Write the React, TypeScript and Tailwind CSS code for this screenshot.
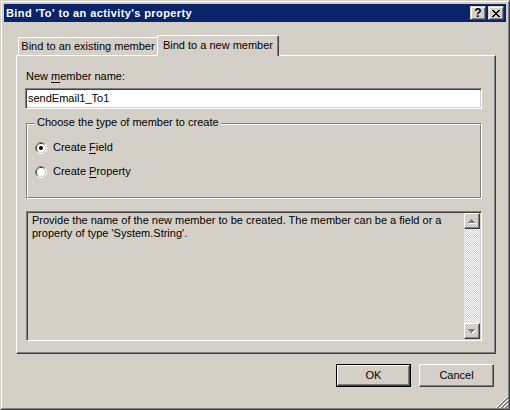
import React from 'react'

const FONT = "font-['Tahoma','Liberation_Sans',Arial,sans-serif]"

// raised 3d edge used by push buttons and scroll arrows
const RAISED =
  'border border-t-white border-l-white border-r-[#404040] border-b-[#404040] shadow-[inset_-1px_-1px_0_#808080]'

const SUNKEN =
  'border border-t-[#808080] border-l-[#808080] border-r-white border-b-white shadow-[inset_1px_1px_0_#404040,inset_-1px_-1px_0_#d4d0c8]'

function Radio({ checked }: { checked?: boolean }) {
  return (
    <svg width="12" height="12" viewBox="0 0 12 12" className="shrink-0">
      <path d="M2.11 9.89A5.5 5.5 0 0 1 9.89 2.11" stroke="#808080" fill="none" />
      <path d="M9.89 2.11A5.5 5.5 0 0 1 2.11 9.89" stroke="#ffffff" fill="none" />
      <path d="M2.82 9.18A4.5 4.5 0 0 1 9.18 2.82" stroke="#404040" fill="none" />
      <path d="M9.18 2.82A4.5 4.5 0 0 1 2.82 9.18" stroke="#d4d0c8" fill="none" />
      <circle cx="6" cy="6" r="4" fill="#ffffff" />
      {checked && <circle cx="6" cy="6" r="2" fill="#000000" />}
    </svg>
  )
}

const UP_ROWS: [number, number][] = [
  [3, 1],
  [2, 3],
  [1, 5],
  [0, 7],
]

function Arrow({ down }: { down?: boolean }) {
  const rows = down ? [...UP_ROWS].reverse() : UP_ROWS
  return (
    <svg width="8" height="5" viewBox="0 0 8 5" shapeRendering="crispEdges">
      {rows.map(([x, w], i) => (
        <rect key={'w' + i} x={x + 1} y={i + 1} width={w} height={1} fill="#ffffff" />
      ))}
      {rows.map(([x, w], i) => (
        <rect key={'g' + i} x={x} y={i} width={w} height={1} fill="#808080" />
      ))}
    </svg>
  )
}

function CloseGlyph() {
  const rows = [0, 1, 2, 3, 4, 5, 6]
  return (
    <svg width="8" height="7" viewBox="0 0 8 7" shapeRendering="crispEdges">
      {rows.map((i) => (
        <g key={i}>
          <rect x={i} y={i} width={2} height={1} fill="#000" />
          <rect x={6 - i} y={i} width={2} height={1} fill="#000" />
        </g>
      ))}
    </svg>
  )
}

function SizeGrip() {
  const lines: { s: number; c: string }[] = []
  for (const base of [11, 15, 19]) {
    lines.push({ s: base, c: '#ffffff' })
    lines.push({ s: base + 1, c: '#808080' })
    lines.push({ s: base + 2, c: '#808080' })
  }
  const px: React.ReactNode[] = []
  lines.forEach(({ s, c }) => {
    for (let x = 0; x < 12; x++) {
      const y = s - x
      if (y >= 0 && y < 12) px.push(<rect key={s + '-' + x} x={x} y={y} width={1} height={1} fill={c} />)
    }
  })
  return (
    <svg width="12" height="12" viewBox="0 0 12 12" shapeRendering="crispEdges">
      {px}
    </svg>
  )
}

function CaptionButton({ children }: { children: React.ReactNode }) {
  return (
    <div
      className={`flex h-[14px] w-[16px] items-center justify-center bg-[#d4d0c8] border border-t-[#d4d0c8] border-l-[#d4d0c8] border-r-[#404040] border-b-[#404040] shadow-[inset_1px_1px_0_#fff,inset_-1px_-1px_0_#808080]`}
    >
      {children}
    </div>
  )
}

function Underlined({ children }: { children: React.ReactNode }) {
  return <span className="underline underline-offset-[2px]">{children}</span>
}

export default function App() {
  return (
    <div className={`${FONT} text-[11px] leading-[13px] text-black`}>
      <div className="h-[410px] w-[510px] border border-t-[#d4d0c8] border-l-[#d4d0c8] border-r-[#404040] border-b-[#404040] bg-[#d4d0c8]">
        <div className="relative flex h-full flex-col border border-t-white border-l-white border-r-[#808080] border-b-[#808080] p-[2px]">
          {/* caption */}
          <div className="flex h-[18px] items-center bg-[#0a246a] pl-[2px] pr-[2px]">
            <span className="flex-1 text-[11px] font-bold tracking-[0.4px] text-white">
              Bind 'To' to an activity's property
            </span>
            <div className="flex gap-[2px]">
              <CaptionButton>
                <span className="text-[12px] leading-[12px] font-bold">?</span>
              </CaptionButton>
              <CaptionButton>
                <CloseGlyph />
              </CaptionButton>
            </div>
          </div>

          {/* tabs */}
          <div className="flex h-[33px] items-end pl-[14px]">
            <div className="flex h-[18px] w-[139px] items-center justify-center rounded-tl-[2px] border-l border-t border-white">
              Bind to an existing member
            </div>
            <div className="relative z-10 -mb-px flex h-[21px] w-[122px] items-center justify-center rounded-t-[2px] border-l border-t border-r border-l-white border-t-white border-r-[#404040] bg-[#d4d0c8] pb-[2px] shadow-[inset_-1px_0_0_#808080]">
              Bind to a new member
            </div>
          </div>

          {/* tab page */}
          <div className="ml-[12px] h-[299px] w-[480px] border border-t-white border-l-white border-r-[#404040] border-b-[#404040] shadow-[inset_-1px_-1px_0_#808080]">
            <div className="flex flex-col px-[8px] pt-[14px]">
              <div className="pl-[1px]">
                New <Underlined>m</Underlined>ember name:
              </div>
              <div className={`mt-[5px] flex h-[21px] w-[457px] items-center bg-white pl-[2px] ${SUNKEN}`}>
                sendEmail1_To1
              </div>

              {/* group box */}
              <div className="relative ml-[1px] mt-[14px] h-[76px] w-[456px] border border-t-[#808080] border-l-[#808080] border-r-white border-b-white">
                <div className="absolute left-[8px] top-[-8px] bg-[#d4d0c8] px-[2px]">
                  Choose the <Underlined>t</Underlined>ype of member to create
                </div>
                <div className="flex h-full flex-col gap-[11px] border border-t-white border-l-white border-r-[#808080] border-b-[#808080] pl-[7px] pt-[16px]">
                  <div className="flex h-[13px] items-center gap-[6px]">
                    <Radio checked />
                    <span>
                      Create <Underlined>F</Underlined>ield
                    </span>
                  </div>
                  <div className="flex h-[13px] items-center gap-[6px]">
                    <Radio />
                    <span>
                      Create <Underlined>P</Underlined>roperty
                    </span>
                  </div>
                </div>
              </div>

              {/* description */}
              <div className={`ml-[1px] mt-[12px] flex h-[130px] w-[456px] p-[1px] ${SUNKEN}`}>
                <div className="flex-1 pl-[4px] pt-[1px]">
                  Provide the name of the new member to be created. The member can be a field or a
                  <br />
                  property of type 'System.String'.
                </div>
                <div className="flex w-[16px] flex-col">
                  <div className={`flex h-[16px] items-center justify-center ${RAISED}`}>
                    <Arrow />
                  </div>
                  <div className="flex-1 bg-[repeating-conic-gradient(#ffffff_0_25%,#d4d0c8_0_50%)] bg-[length:2px_2px]" />
                  <div className={`flex h-[16px] items-center justify-center ${RAISED}`}>
                    <Arrow down />
                  </div>
                </div>
              </div>
            </div>
          </div>

          {/* buttons */}
          <div className="mt-[10px] flex justify-end gap-[8px] pr-[12px]">
            <div className="h-[23px] w-[75px] border border-black">
              <div className={`flex h-full items-center justify-center ${RAISED}`}>OK</div>
            </div>
            <div className={`flex h-[23px] w-[75px] items-center justify-center ${RAISED}`}>Cancel</div>
          </div>

          <div className="absolute bottom-0 right-0">
            <SizeGrip />
          </div>
        </div>
      </div>
    </div>
  )
}
